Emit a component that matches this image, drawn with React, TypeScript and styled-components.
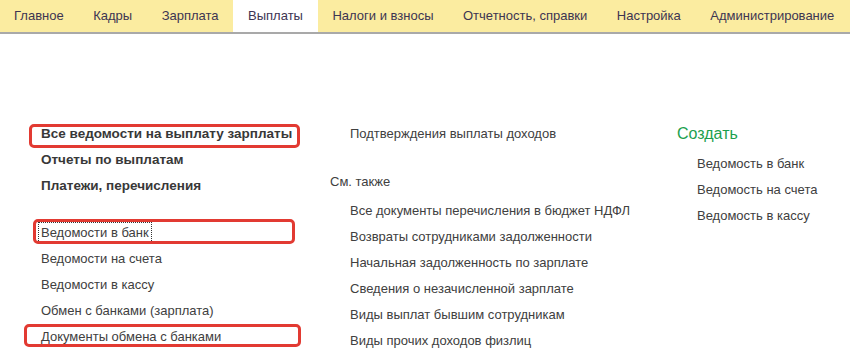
import styled, { createGlobalStyle } from "styled-components";

const GlobalStyle = createGlobalStyle`
  body {
    margin: 0;
    background: #ffffff;
    font-family: "Liberation Sans", Arial, sans-serif;
    font-size: 13px;
    color: #404040;
  }
`;

const tabs = [
  "Главное",
  "Кадры",
  "Зарплата",
  "Выплаты",
  "Налоги и взносы",
  "Отчетность, справки",
  "Настройка",
  "Администрирование",
];

type Mark = { left: number; width: number; top: number; height: number };

type Entry = { text: string; mark?: Mark; focused?: boolean };

const boldItems: Entry[] = [
  {
    text: "Все ведомости на выплату зарплаты",
    mark: { left: -12, width: 271, top: 3, height: 24 },
  },
  { text: "Отчеты по выплатам" },
  { text: "Платежи, перечисления" },
];

const plainItems: Entry[] = [
  {
    text: "Ведомости в банк",
    mark: { left: -8, width: 262, top: -1, height: 25 },
    focused: true,
  },
  { text: "Ведомости на счета" },
  { text: "Ведомости в кассу" },
  { text: "Обмен с банками (зарплата)" },
  {
    text: "Документы обмена с банками",
    mark: { left: -17, width: 277, top: 0, height: 23 },
  },
];

const seeAlso = [
  "Все документы перечисления в бюджет НДФЛ",
  "Возвраты сотрудниками задолженности",
  "Начальная задолженность по зарплате",
  "Сведения о незачисленной зарплате",
  "Виды выплат бывшим сотрудникам",
  "Виды прочих доходов физлиц",
];

const createItems = ["Ведомость в банк", "Ведомость на счета", "Ведомость в кассу"];

export default function App() {
  return (
    <>
      <GlobalStyle />
      <TabBar>
        {tabs.map((t) => (
          <Tab key={t} $active={t === "Выплаты"}>
            {t}
          </Tab>
        ))}
      </TabBar>
      <Content>
        <LeftColumn>
          {boldItems.map((i) => (
            <Row key={i.text} $bold $mark={i.mark}>
              {i.text}
            </Row>
          ))}
          <Spacer />
          {plainItems.map((i) => (
            <Row key={i.text} $mark={i.mark}>
              {i.focused ? <Focused>{i.text}</Focused> : i.text}
            </Row>
          ))}
        </LeftColumn>
        <MiddleColumn>
          <Row $indent>Подтверждения выплаты доходов</Row>
          <SectionTitle>См. также</SectionTitle>
          {seeAlso.map((t) => (
            <Row key={t} $indent>
              {t}
            </Row>
          ))}
        </MiddleColumn>
        <RightColumn>
          <CreateTitle>Создать</CreateTitle>
          {createItems.map((t) => (
            <Row key={t} $indent>
              {t}
            </Row>
          ))}
        </RightColumn>
      </Content>
    </>
  );
}

const TabBar = styled.div`
  display: flex;
  height: 32px;
  background: #fbeca0;
  border-bottom: 2px solid #a9a9a9;
`;

const Tab = styled.div<{ $active?: boolean }>`
  display: flex;
  align-items: center;
  padding: 0 15.25px 1px;
  margin-right: -1px;
  white-space: nowrap;
  color: #3d3552;
  background: ${(p) => (p.$active ? "#ffffff" : "transparent")};

  &:first-child {
    padding-left: 14px;
  }
`;

const Content = styled.div`
  display: flex;
  padding-top: 87px;
`;

const LeftColumn = styled.div`
  width: 289px;
  padding-left: 41px;
  display: flex;
  flex-direction: column;
`;

const MiddleColumn = styled.div`
  width: 347px;
  display: flex;
  flex-direction: column;
`;

const RightColumn = styled.div`
  display: flex;
  flex-direction: column;
`;

const Row = styled.div<{ $bold?: boolean; $indent?: boolean; $mark?: Mark }>`
  position: relative;
  height: 26px;
  line-height: 26px;
  white-space: nowrap;
  padding-left: ${(p) => (p.$indent ? "20px" : "0")};
  font-weight: ${(p) => (p.$bold ? 700 : 400)};
  font-size: ${(p) => (p.$bold ? "13.5px" : "13px")};
  color: ${(p) => (p.$bold ? "#383838" : "#404040")};

  ${(p) =>
    p.$mark &&
    `
    &::after {
      content: "";
      position: absolute;
      left: ${p.$mark.left}px;
      top: ${p.$mark.top}px;
      width: ${p.$mark.width}px;
      height: ${p.$mark.height}px;
      box-sizing: border-box;
      border: 3px solid #e23a32;
      border-radius: 5px;
      pointer-events: none;
    }
  `}
`;

const Focused = styled.span`
  outline: 1px dotted #333333;
  outline-offset: 2px;
`;

const Spacer = styled.div`
  height: 21px;
`;

const SectionTitle = styled.div`
  height: 26px;
  line-height: 26px;
  margin-top: 22px;
  margin-bottom: 3px;
  color: #404040;
`;

const CreateTitle = styled.div`
  height: 26px;
  line-height: 26px;
  margin-bottom: 4px;
  font-size: 16px;
  color: #1c9f4e;
`;
